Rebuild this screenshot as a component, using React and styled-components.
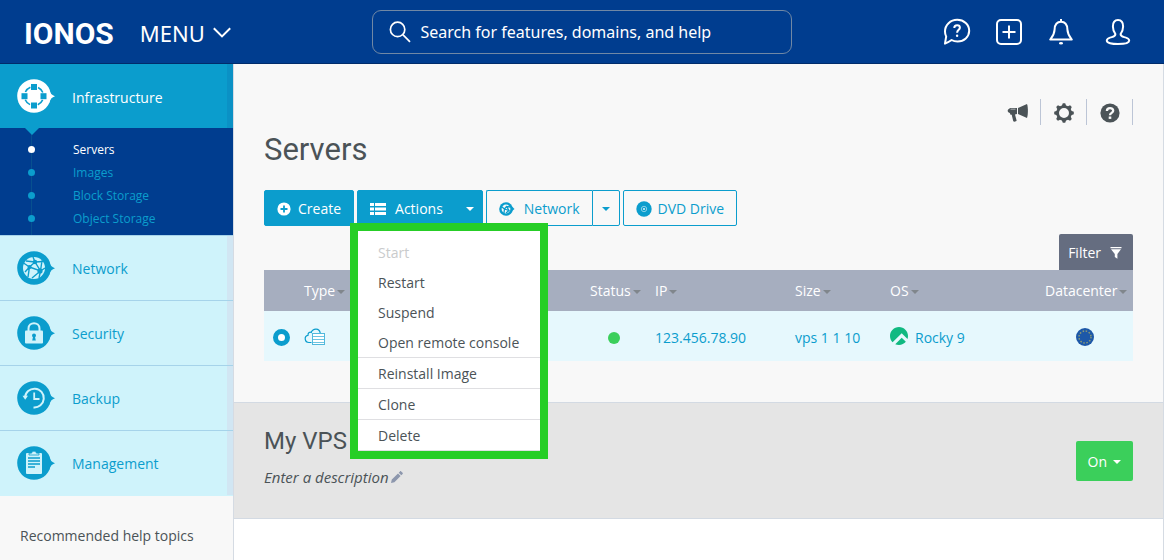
import React, {useState} from 'react'

import styled, {createGlobalStyle, css} from 'styled-components'
import {SiRockylinux} from 'react-icons/si'

const navy = '#003d8f'
const cyan = '#0b9dcd'
const pale = '#cff3fb'
const text = '#4b5357'

const subItems = ['Servers', 'Images', 'Block Storage', 'Object Storage']

const menuItems = [
    {label: 'Start', disabled: true},
    {label: 'Restart'},
    {label: 'Suspend'},
    {label: 'Open remote console', divider: true},
    {label: 'Reinstall Image', divider: true},
    {label: 'Clone', divider: true},
    {label: 'Delete', divider: true}
]

function ChevronIcon(){
    return(
        <svg width="18" height="12" viewBox="0 0 18 12" fill="none" stroke="#fff" strokeWidth="2">
            <path d="M0.8 1.2 L9 9.4 L17.2 1.2"/>
        </svg>
    )
}

function SearchIcon(){
    return(
        <svg width="22" height="22" viewBox="0 0 22 22" fill="none" stroke="#fff" strokeWidth="1.7">
            <circle cx="8.6" cy="8.4" r="7.2"/>
            <path d="M13.8 13.6 L21 20.8"/>
        </svg>
    )
}

function ChatIcon(){
    return(
        <svg width="28" height="28" viewBox="0 0 28 28" fill="none" stroke="#fff" strokeWidth="2" strokeLinejoin="round">
            <path d="M2 25.6 C2.6 22 2.9 20 3.2 18.6 C2.4 17 2 15.2 2 13.4 C2 6.9 7.4 1.8 14.2 1.8 C21 1.8 26.2 6.7 26.2 12.8 C26.2 18.9 21 23.4 14.6 23.4 C12.2 23.4 10.2 22.9 8.6 22 C6.6 23.4 4.8 24.6 2 25.6 Z"/>
            <path d="M11.3 9.9 C11.3 8.3 12.5 7.3 14.1 7.3 C15.8 7.3 16.9 8.3 16.9 9.7 C16.9 11.8 14.1 12 14.1 14.8"/>
            <circle cx="14.1" cy="17.8" r="1.2" fill="#fff" stroke="none"/>
        </svg>
    )
}

function AddIcon(){
    return(
        <svg width="28" height="28" viewBox="0 0 28 28" fill="none" stroke="#fff" strokeWidth="2">
            <rect x="2" y="2" width="24" height="24" rx="4"/>
            <path d="M14 7.5 V20.5 M7.5 14 H20.5"/>
        </svg>
    )
}

function BellIcon(){
    return(
        <svg width="28" height="28" viewBox="0 0 28 28" fill="none" stroke="#fff" strokeWidth="2" strokeLinejoin="round">
            <path d="M3.2 21.5 C5.6 18.5 7.4 16.5 7.6 11.5 C7.8 6.5 10 3.8 14 3.8 C18 3.8 20.2 6.5 20.4 11.5 C20.6 16.5 22.4 18.5 24.8 21.5 Z"/>
            <path d="M14 1 V4"/>
            <ellipse cx="14" cy="25.2" rx="2" ry="1.3" fill="#fff" stroke="none"/>
        </svg>
    )
}

function UserIcon(){
    return(
        <svg width="28" height="28" viewBox="0 0 28 28" fill="none" stroke="#fff" strokeWidth="2" strokeLinejoin="round">
            <path d="M11.4 16 C9.8 13.8 8.9 11.4 8.9 8.4 C8.9 4.2 10.6 1.9 14 1.9 C17.4 1.9 19.1 4.2 19.1 8.4 C19.1 11.4 18.2 13.8 16.6 16 C16.6 18 17.6 18.5 20.2 19.1 C23.6 19.9 25.2 21 25.2 22.6 C25.2 25 20.4 26.1 14 26.1 C7.6 26.1 2.8 25 2.8 22.6 C2.8 21 4.4 19.9 7.8 19.1 C10.4 18.5 11.4 18 11.4 16 Z"/>
        </svg>
    )
}

// round marker with a small pointer on its right side
function Badge({fill, children}){
    return(
        <svg width="38" height="34" viewBox="0 0 38 34">
            <circle cx="17" cy="17" r="16.8" fill={fill}/>
            <path d="M32 10.5 C33 14.5 35 16.2 38 17.2 C35 18.2 33 20 32 24 Z" fill={fill}/>
            {children}
        </svg>
    )
}

function InfrastructureIcon(){
    return(
        <Badge fill="#fff">
            <circle cx="17" cy="17" r="9.5" fill="none" stroke={cyan} strokeWidth="1.6" strokeDasharray="7 7.92" strokeDashoffset="-3.96"/>
            <g fill={cyan}>
                <rect x="14" y="5" width="6" height="6"/>
                <rect x="14" y="23.5" width="6" height="6"/>
                <rect x="4.5" y="14.2" width="6" height="6"/>
                <rect x="23.5" y="14.2" width="6" height="6"/>
            </g>
        </Badge>
    )
}

function GlobeIcon(){
    return(
        <Badge fill={cyan}>
            <circle cx="17" cy="17" r="11" fill={pale}/>
            <g fill="none" stroke={cyan} strokeWidth="1.4">
                <path d="M12.5 16 L18 11 L23.5 20 L12.5 16 L11 26 M18 11 L16 6 M12.5 16 L6.5 12 M12.5 16 L8 21 M23.5 20 L15 27 M23.5 20 L28 17 M23.5 20 L22 27 M18 11 L26 10.5 M9 10 L18 11 M23.5 20 L25 9.5"/>
            </g>
            <g fill={cyan}>
                <circle cx="12.5" cy="16" r="2"/>
                <circle cx="18" cy="11" r="2.2"/>
                <circle cx="23" cy="20" r="2.6"/>
            </g>
        </Badge>
    )
}

function LockIcon(){
    return(
        <Badge fill={cyan}>
            <path d="M11.5 15 V12.5 C11.5 5.5 22.5 5.5 22.5 12.5 V15" fill="none" stroke={pale} strokeWidth="2"/>
            <rect x="8" y="14.5" width="18" height="13" rx="1" fill={pale}/>
            <circle cx="17" cy="19.5" r="2" fill={cyan}/>
            <path d="M16.2 20 H17.8 L18.8 24.5 H15.2 Z" fill={cyan}/>
        </Badge>
    )
}

function BackupIcon(){
    return(
        <Badge fill={cyan}>
            <path d="M8 16.5 A9.4 9.4 0 1 1 16.5 26.4" fill="none" stroke={pale} strokeWidth="2"/>
            <path d="M5.5 14.8 H11 L8.2 18.8 Z" fill={pale}/>
            <path d="M17.2 11.5 V18 H22.5" fill="none" stroke={pale} strokeWidth="1.8"/>
        </Badge>
    )
}

function ClipboardIcon(){
    return(
        <Badge fill={cyan}>
            <rect x="9" y="7" width="16" height="21" rx="1" fill={pale}/>
            <path d="M12 9 V7.2 H14.5 L15.5 5.2 H18.5 L19.5 7.2 H22 V9 Z" fill={pale} stroke={cyan} strokeWidth="0.8"/>
            <path d="M11 12 H23 M11 15 H23 M11 18 H23 M11 21 H18" stroke={cyan} strokeWidth="1.3"/>
        </Badge>
    )
}

function MegaphoneIcon(){
    return(
        <svg width="22" height="22" viewBox="0 0 22 22" fill={text}>
            <path d="M11 6 L20 2 C21.2 5 21.2 12.5 20 16 L11 12 Z"/>
            <path d="M10 5.9 V12.1 L8 12.5 L9.6 18.5 C9.7 19.5 6.6 20.3 6.2 19.1 L4.7 12.7 H3.5 L2.8 10.9 C1 10.7 0.4 9.5 0.8 8.1 C1.2 6.9 2.2 6.5 3.2 5.9 Z"/>
            <path d="M3.5 7.2 H8.5" stroke="#9a9fa2" strokeWidth="1.3"/>
        </svg>
    )
}

function GearIcon(){
    return(
        <svg width="20" height="20" viewBox="0 0 20 20">
            <circle cx="10" cy="10" r="6.4" fill="none" stroke={text} strokeWidth="2.8"/>
            <g fill={text}>
                {[0, 45, 90, 135, 180, 225, 270, 315].map(angle => (
                    <path key={angle} d="M7.6 3.5 L8.8 0.2 H11.2 L12.4 3.5 Z" transform={`rotate(${angle} 10 10)`}/>
                ))}
            </g>
        </svg>
    )
}

function HelpIcon(){
    return(
        <svg width="20" height="20" viewBox="0 0 20 20">
            <circle cx="10" cy="10" r="9.6" fill={text}/>
            <path d="M6.9 7.9 C6.9 4.2 13.2 4.2 13.2 7.7 C13.2 9.8 10 9.9 10 12.2" fill="none" stroke="#f8f8f8" strokeWidth="2.3"/>
            <rect x="8.7" y="13.5" width="2.6" height="2.4" fill="#f8f8f8"/>
        </svg>
    )
}

function PlusIcon(){
    return(
        <svg width="14" height="14" viewBox="0 0 14 14">
            <circle cx="7" cy="7" r="6.6" fill="#fff"/>
            <path d="M7 3.5 V10.5 M3.5 7 H10.5" stroke={cyan} strokeWidth="1.8"/>
        </svg>
    )
}

function ListIcon(){
    return(
        <svg width="16" height="12" viewBox="0 0 16 12" fill="#fff">
            <path d="M0 0 H4 V3 H0 Z M5 0 H16 V3 H5 Z M0 4.5 H4 V7.5 H0 Z M5 4.5 H16 V7.5 H5 Z M0 9 H4 V12 H0 Z M5 9 H16 V12 H5 Z"/>
        </svg>
    )
}

function SmallGlobeIcon(){
    return(
        <svg width="16" height="14" viewBox="0 0 16 14">
            <circle cx="7" cy="7" r="6.8" fill={cyan}/>
            <path d="M12.5 4 L15.5 7 L12.5 9.5 Z" fill={cyan}/>
            <circle cx="7" cy="7" r="4.4" fill="#f8f8f8"/>
            <path d="M3 5 L5.5 7 L7.5 4.5 L10 8.5 L5.5 7 L5 11 M10 8.5 L7 11 M7.5 4.5 L11 5" fill="none" stroke={cyan} strokeWidth="1.3"/>
        </svg>
    )
}

function DiscIcon(){
    return(
        <svg width="16" height="16" viewBox="0 0 16 16">
            <circle cx="8" cy="8" r="7.7" fill={cyan}/>
            <circle cx="8" cy="8" r="2.7" fill="none" stroke="#a5dcee" strokeWidth="0.8"/>
            <circle cx="8" cy="8" r="1.1" fill="#d8f0f8"/>
        </svg>
    )
}

function FilterIcon(){
    return(
        <svg width="12" height="14" viewBox="0 0 12 14" fill="#fff">
            <path d="M0.5 1 H11.5 V2.2 H0.5 Z M1 3.2 H11 L7.4 8 V12.8 L4.8 11 V8 Z"/>
        </svg>
    )
}

function CloudServerIcon(){
    return(
        <svg width="22" height="18" viewBox="0 0 22 18" fill="none" stroke={cyan}>
            <path d="M7.5 14.5 H5 C0.5 14.5 -0.2 8 4 7.3 C3.8 4.5 6 3.6 7.3 4.4 C9 0 15.5 0 16.2 5" strokeWidth="1.2"/>
            <rect x="8.5" y="5.5" width="12" height="11" fill="#fff" strokeWidth="1" strokeOpacity="0.7"/>
            <path d="M9 8.5 H20 M9 11.5 H20 M9 14.5 H20" strokeWidth="1" strokeOpacity="0.6"/>
        </svg>
    )
}

function EuropeIcon(){
    return(
        <svg width="18" height="18" viewBox="0 0 18 18">
            <circle cx="9" cy="9" r="9" fill="#1d58a8"/>
            <circle cx="9" cy="9" r="6" fill="none" stroke="#8b9a76" strokeWidth="1.5" strokeDasharray="1.5 1.64"/>
        </svg>
    )
}

function PencilIcon(){
    return(
        <svg width="12" height="12" viewBox="0 0 12 12" fill="#8d97ad">
            <path d="M0 12 L0.8 8.6 L7 2.4 L9.6 5 L3.4 11.2 Z M7.7 1.7 L9 0.4 C9.4 0 9.8 0 10.2 0.4 L11.6 1.8 C12 2.2 12 2.6 11.6 3 L10.3 4.3 Z"/>
        </svg>
    )
}

const navItems = [
    {label: 'Network', icon: <GlobeIcon/>},
    {label: 'Security', icon: <LockIcon/>},
    {label: 'Backup', icon: <BackupIcon/>},
    {label: 'Management', icon: <ClipboardIcon/>}
]

function ActionsMenu(){
    return(
        <Dropdown>
            {menuItems.map(item => (
                <DropdownItem key={item.label} $divider={item.divider}>
                    <DropdownButton type="button" disabled={item.disabled}>{item.label}</DropdownButton>
                </DropdownItem>
            ))}
        </Dropdown>
    )
}

function App(){
    const [open, setOpen] = useState(true)

    return(
        <>
            <GlobalStyle/>
            <Header>
                <Brand>
                    <Logo href="#home">IONOS</Logo>
                    <MenuButton type="button">MENU <ChevronIcon/></MenuButton>
                </Brand>
                <SearchBox>
                    <SearchIcon/>
                    <input type="search" aria-label="Search" placeholder="Search for features, domains, and help"/>
                </SearchBox>
                <HeaderIcons>
                    <IconButton type="button" aria-label="Support"><ChatIcon/></IconButton>
                    <IconButton type="button" aria-label="Add"><AddIcon/></IconButton>
                    <IconButton type="button" aria-label="Notifications"><BellIcon/></IconButton>
                    <IconButton type="button" aria-label="Account"><UserIcon/></IconButton>
                </HeaderIcons>
            </Header>
            <Page>
                <Sidebar>
                    <Nav>
                        <NavLink href="#infrastructure" $active>
                            <InfrastructureIcon/>
                            <Label>Infrastructure</Label>
                        </NavLink>
                        <SubNav>
                            {subItems.map((label, i) => (
                                <li key={label}>
                                    <SubLink href="#sub" $active={i === 0}>{label}</SubLink>
                                </li>
                            ))}
                        </SubNav>
                        {navItems.map(item => (
                            <NavLink key={item.label} href="#nav">
                                {item.icon}
                                <Label>{item.label}</Label>
                            </NavLink>
                        ))}
                    </Nav>
                    <HelpTopics>Recommended help topics</HelpTopics>
                </Sidebar>
                <Main>
                    <Overview>
                        <Tools>
                            <Tool type="button" aria-label="News"><MegaphoneIcon/></Tool>
                            <Tool type="button" aria-label="Settings"><GearIcon/></Tool>
                            <Tool type="button" aria-label="Help"><HelpIcon/></Tool>
                        </Tools>
                        <Title>Servers</Title>
                        <Toolbar>
                            <Button type="button" $filled><PlusIcon/>Create</Button>
                            <MenuAnchor>
                                <Button type="button" $filled $menu aria-expanded={open} onClick={()=>{setOpen(!open)}}>
                                    <ListIcon/>
                                    <ActionsLabel>Actions</ActionsLabel>
                                    <Caret/>
                                </Button>
                                {open && <ActionsMenu/>}
                            </MenuAnchor>
                            <Split>
                                <Button type="button" $gap={9}><SmallGlobeIcon/>Network</Button>
                                <Button type="button" $narrow aria-label="Network options"><Caret/></Button>
                            </Split>
                            <Button type="button" $gap={6}><DiscIcon/>DVD Drive</Button>
                        </Toolbar>
                        <FilterButton type="button">Filter <FilterIcon/></FilterButton>
                        <Table>
                            <colgroup>
                                <Col $width={40}/>
                                <Col $width={60}/>
                                <col/>
                                <Col $width={65}/>
                                <Col $width={140}/>
                                <Col $width={95}/>
                                <Col $width={155}/>
                                <Col $width={88}/>
                            </colgroup>
                            <thead>
                                <tr>
                                    <th/>
                                    <th>Type<Caret $sort/></th>
                                    <th/>
                                    <th>Status<Caret $sort/></th>
                                    <th>IP<Caret $sort/></th>
                                    <th>Size<Caret $sort/></th>
                                    <th>OS<Caret $sort/></th>
                                    <th>Datacenter<Caret $sort/></th>
                                </tr>
                            </thead>
                            <tbody>
                                <tr>
                                    <Cell $center><Radio type="radio" name="server" aria-label="My VPS" defaultChecked/></Cell>
                                    <Cell><CloudServerIcon/></Cell>
                                    <Cell/>
                                    <StatusCell><Dot/></StatusCell>
                                    <Cell><Label>123.456.78.90</Label></Cell>
                                    <Cell><Label>vps 1 1 10</Label></Cell>
                                    <Cell><Os><SiRockylinux size={18} color="#10b981"/><Label>Rocky 9</Label></Os></Cell>
                                    <DatacenterCell><EuropeIcon/></DatacenterCell>
                                </tr>
                            </tbody>
                        </Table>
                    </Overview>
                    <Details>
                        <Summary>
                            <Name>My VPS <PencilIcon/></Name>
                            <Description>Enter a description<PencilIcon/></Description>
                        </Summary>
                        <PowerButton type="button">On <Caret/></PowerButton>
                    </Details>
                </Main>
            </Page>
        </>
    )
}

export default App

const GlobalStyle = createGlobalStyle`
    *{
        box-sizing: border-box;
    }
    body{
        margin: 0;
        background: #f8f8f8;
        color: ${text};
        font: 14px/20px "Open Sans", sans-serif;
    }
    button, input{
        font: inherit;
    }
    button{
        cursor: pointer;
    }
    svg{
        flex: none;
    }
`

const Header = styled.header`
    display: grid;
    grid-template-columns: 1fr 36% 1fr;
    align-items: center;
    height: 64px;
    background: ${navy};
    border-bottom: 1px solid #002c6b;
    color: #fff;
`

const Brand = styled.div`
    display: flex;
    align-items: center;
    gap: 26px;
    padding-left: 24px;
`

const Logo = styled.a`
    padding-top: 4px;
    color: #fff;
    font: 700 30px/40px "Roboto", sans-serif;
    text-decoration: none;
`

const MenuButton = styled.button`
    display: flex;
    align-items: center;
    gap: 8px;
    padding: 2px 0 0;
    border: 0;
    background: none;
    color: #fff;
    font-family: "Noto Sans", sans-serif;
    font-size: 22px;
    line-height: 32px;
`

const SearchBox = styled.label`
    display: flex;
    align-items: center;
    gap: 9px;
    height: 44px;
    padding: 0 16px;
    border: 1px solid #7088a5;
    border-radius: 9px;

    input{
        flex: 1;
        min-width: 0;
        padding: 0;
        border: 0;
        outline: 0;
        background: none;
        color: #fff;
        font-family: "Noto Sans", sans-serif;
        font-size: 16px;
        line-height: 24px;
    }
    input::placeholder{
        color: #fff;
        opacity: 1;
    }
`

const HeaderIcons = styled.div`
    display: flex;
    justify-content: flex-end;
    gap: 24px;
    padding-right: 32px;
`

const IconButton = styled.button`
    display: flex;
    padding: 0;
    border: 0;
    background: none;

    &:last-child{
        margin-left: 5px;
    }
`

const Page = styled.div`
    display: grid;
    grid-template-columns: 234px 1fr;
    min-height: calc(100vh - 64px);
`

const Sidebar = styled.aside`
    border-right: 1px solid #d5dbe3;
`

const Nav = styled.nav`
    border-bottom: 1px solid ${pale};
`

const Label = styled.span`
    display: block;
    padding-top: 3px;
`

const NavLink = styled.a`
    display: flex;
    align-items: center;
    gap: 17px;
    height: 65px;
    padding-left: 17px;
    border-top: 1px solid #a6d3ea;
    background: linear-gradient(to left, #d1e6f3 6px, ${pale} 6px);
    color: ${cyan};
    text-decoration: none;

    ${Label}{
        padding-top: 2px;
    }

    ${({$active}) => $active && css`
        height: 64px;
        border-top: 0;
        background: linear-gradient(to left, #0b91c5 6px, ${cyan} 6px);
        color: #fff;

        ${Label}{
            padding-top: 3px;
        }
    `}
`

const SubNav = styled.ul`
    position: relative;
    margin: 0;
    padding: 10px 0 5px;
    background: linear-gradient(#07508f, #07508f) 31px 0 / 1px 100% no-repeat ${navy};
    list-style: none;

    &::before{
        content: '';
        position: absolute;
        top: 0;
        left: 25px;
        border: solid transparent;
        border-width: 7px 7px 0;
        border-top-color: ${cyan};
    }
`

const SubLink = styled.a`
    display: flex;
    align-items: center;
    gap: 38px;
    padding-left: 28px;
    color: ${({$active}) => $active ? '#fff' : cyan};
    font-size: 12px;
    line-height: 23px;
    text-decoration: none;

    &::before{
        content: '';
        width: 7px;
        height: 7px;
        border-radius: 50%;
        background: currentColor;
    }
`

const HelpTopics = styled.div`
    padding: 30px 20px 14px;
`

const Main = styled.main`
    min-width: 0;
    border-right: 1px solid #d5dbe3;
    background: #fff;
`

const Overview = styled.section`
    padding: 35px 30px 41px;
    background: #f8f8f8;
`

const Tools = styled.div`
    display: flex;
    justify-content: flex-end;
`

const Tool = styled.button`
    display: flex;
    align-items: center;
    justify-content: center;
    width: 46px;
    height: 26px;
    padding: 2px 0 0;
    border: 0;
    border-right: 1px solid #bcc5d6;
    background: none;
`

const Title = styled.h1`
    margin: 6px 0 21px;
    font: 400 31px/38px "Roboto", sans-serif;
`

const Toolbar = styled.div`
    display: flex;
    gap: 3px;
`

const Button = styled.button`
    display: flex;
    align-items: center;
    gap: ${({$gap}) => $gap || 7}px;
    height: 36px;
    padding: 2px ${({$menu}) => $menu ? 8 : 12}px 0 12px;
    border: 1px solid ${cyan};
    border-radius: 2px;
    background: ${({$filled}) => $filled ? cyan : '#f8f8f8'};
    color: ${({$filled}) => $filled ? '#fff' : cyan};
    white-space: nowrap;

    ${({$narrow}) => $narrow && css`
        padding: 2px 9px 0;
    `}
`

const MenuAnchor = styled.div`
    position: relative;
`

const ActionsLabel = styled.span`
    padding: 0 16px 0 2px;
`

const Caret = styled.span`
    display: inline-block;
    border: solid transparent;
    border-width: 4px 4px 0;
    border-top-color: currentColor;

    ${({$sort}) => $sort && css`
        margin-left: 2px;
        border-top-color: #80868c;
        vertical-align: middle;
    `}
`

const Split = styled.div`
    display: flex;

    ${Button}:first-child{
        border-right: 0;
        border-radius: 2px 0 0 2px;
    }
    ${Button}:last-child{
        border-radius: 0 2px 2px 0;
    }
`

const Dropdown = styled.ul`
    position: absolute;
    z-index: 1;
    top: 33px;
    left: -7px;
    width: 198px;
    margin: 0;
    padding: 6px 0 0;
    border: 8px solid #26ce26;
    background: #fff;
    list-style: none;
`

const DropdownItem = styled.li`
    ${({$divider}) => $divider && css`
        border-bottom: 1px solid #dfdfe2;
    `}
`

const DropdownButton = styled.button`
    width: 100%;
    height: 30px;
    padding: 2px 20px 0;
    border: 0;
    background: none;
    color: ${text};
    text-align: left;
    white-space: nowrap;

    &:disabled{
        color: #c9cbcc;
    }
`

const FilterButton = styled.button`
    display: flex;
    align-items: center;
    gap: 9px;
    height: 36px;
    margin: 8px 0 0 auto;
    padding: 2px 11px 0 9px;
    border: 0;
    border-radius: 2px 2px 0 0;
    background: #656d80;
    color: #fff;
`

const Table = styled.table`
    width: 100%;
    border-collapse: collapse;
    table-layout: fixed;

    th{
        height: 41px;
        padding: 0;
        background: #a6aebf;
        color: #fff;
        font-weight: 400;
        text-align: left;
        white-space: nowrap;
    }
`

const Col = styled.col`
    width: ${({$width}) => $width}px;
`

const Cell = styled.td`
    height: 50px;
    padding: 0;
    background: #e6f8fd;
    color: ${cyan};
    text-align: ${({$center}) => $center ? 'center' : 'left'};

    svg, input{
        vertical-align: middle;
    }
`

const StatusCell = styled(Cell)`
    padding: 3px 0 0 18px;
`

const DatacenterCell = styled(Cell)`
    padding-left: 31px;
`

const Radio = styled.input`
    appearance: none;
    width: 17px;
    height: 17px;
    margin: 0 5px 0 0;
    border: 5px solid ${cyan};
    border-radius: 50%;
    background: #fff;
`

const Dot = styled.span`
    display: block;
    width: 12px;
    height: 12px;
    border-radius: 50%;
    background: #3bcf5b;
`

const Os = styled.span`
    display: flex;
    align-items: center;
    gap: 7px;
`

const Details = styled.section`
    display: flex;
    align-items: center;
    justify-content: space-between;
    padding: 22px 30px;
    border: solid #d3dae3;
    border-width: 1px 0;
    background: #e5e5e5;
`

const Summary = styled.div`
    padding-bottom: 8px;
`

const Name = styled.h2`
    margin: 0 0 10px;
    font: 400 24px/32px "Roboto", sans-serif;
`

const Description = styled.p`
    display: flex;
    align-items: center;
    gap: 2px;
    margin: 0 0 1px;
    font-size: 15px;
    font-style: italic;
`

const PowerButton = styled.button`
    display: flex;
    align-items: center;
    gap: 6px;
    height: 40px;
    padding: 2px 12px 0;
    border: 0;
    border-radius: 2px;
    background: #3bcf5b;
    color: #fff;
`
